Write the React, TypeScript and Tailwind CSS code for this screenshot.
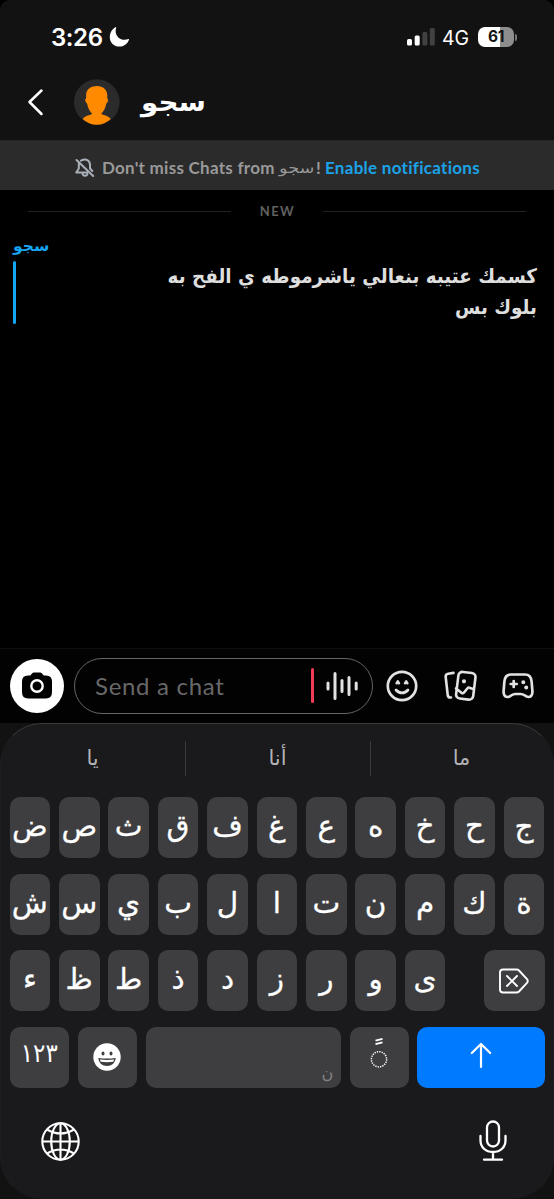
import React from "react";

const latin = "font-['Lato','DejaVu_Sans',sans-serif]";
const arabic = "font-['DejaVu_Sans',sans-serif]";

function StatusBar() {
  return (
    <div className="flex h-[64px] items-start pl-[51px] pr-[37px] pt-[25px] font-['Inter',sans-serif] text-white">
      <span className="w-[52px] whitespace-nowrap text-[24px] font-semibold leading-[25px] tracking-[-0.4px]">3:26</span>
      <svg className="ml-[6px] mt-[2px]" width="21" height="20" viewBox="0 0 21 20" fill="white">
        <path d="M7.200.6C6 4.400 6.600 8 9.300 10.400c2.700 2.400 6.400 2.900 10.200 1.700.5-.1.700.2.500.6C18.400 17 14.800 19.600 10.400 19.600 5 19.600.8 15.500.8 10.200.8 5.800 3 2 6.500.2c.4-.2.800 0 .7.4z" />
      </svg>
      <div className="flex-1" />
      <svg className="mt-[2px]" width="28" height="19" viewBox="0 0 28 19">
        <rect x="0" y="12" width="5" height="6.500" rx="1.500" fill="white" />
        <rect x="7.700" y="8.500" width="5" height="10" rx="1.500" fill="white" />
        <rect x="15.400" y="5" width="5" height="13.500" rx="1.500" fill="#414141" />
        <rect x="22.800" y="1" width="5" height="17.500" rx="1.500" fill="#414141" />
      </svg>
      <span className="ml-[7px] w-[28px] whitespace-nowrap text-[19.500px] font-normal leading-[26px]">4G</span>
      <div className="ml-[8px] mt-[2px] flex h-[20px] w-[36px] items-center justify-center rounded-[7px] bg-[linear-gradient(90deg,#fff_62%,#8d8d8d_62%)] text-[15.500px] font-bold tracking-[-0.3px] text-[#121212]">61</div>
      <div className="ml-[1px] mt-[9px] h-[7px] w-[2px] rounded-r-full bg-[#777]" />
    </div>
  );
}

function Header() {
  return (
    <div className="flex h-[76px] items-start">
      <svg className="ml-[27px] mt-[24px]" width="18" height="28" viewBox="0 0 18 28" fill="none" stroke="white" strokeWidth="2.500" strokeLinecap="round" strokeLinejoin="round">
        <path d="M14.500 2.500L2.500 14l12 12" />
      </svg>
      <svg className="ml-[29px] mt-[15px]" width="46" height="46" viewBox="0 0 46 46">
        <circle cx="22.800" cy="23" r="22.800" fill="#2b2b2b" />
        <path fill="#ff8a00" d="M22.700 7C16 7 12 11 12.100 16.500v2.900c-1.200.3-1 1.700-.4 3.400.3.800.7 1.600 1.400 1.700.8 4.500 2.700 7.800 5 10.200-.8 1.500-5.700.8-9.500 5.200A22.500 22.500 0 0 0 22.700 45.800 22.500 22.500 0 0 0 36.800 39.900c-3.800-4.400-8.700-3.700-9.500-5.200 2.300-2.400 4.200-5.700 5-10.200.7-.1 1.100-.9 1.400-1.700.6-1.700.8-3.100-.4-3.400v-2.900C33.400 11 29.400 7 22.700 7z" />
      </svg>
      <span className={`${arabic} ml-[21px] mt-[20px] origin-left scale-x-[1.07] whitespace-nowrap text-[26px] font-bold leading-[36px] text-white`}>سجو</span>
    </div>
  );
}

function Banner() {
  return (
    <div className={`${latin} flex h-[50px] items-center border-t border-[#242424] bg-[#2b2b2b] pl-[75px] pt-[5px] text-[17px] font-bold leading-[24px]`}>
      <svg width="20" height="20" viewBox="0 0 20 20" fill="none" stroke="#a9b0b8" strokeWidth="2" strokeLinecap="round" strokeLinejoin="round">
        <path d="M6 2.700C11 0 15 2.500 15 7v3.500L17.300 13M3.800 5.500v5L1.300 14.500H12M7.500 15.500c.3 3 4.200 3 5 .5M1.500 2l16.700 16" />
      </svg>
      <span className="ml-[7px] w-[172px] whitespace-nowrap tracking-[0.270px] text-[#999]">Don't miss Chats from</span>
      <span className={`${arabic} ml-[5px] w-[37px] origin-left scale-x-[1.180] whitespace-nowrap text-[15px] font-normal text-[#999]`}>سجو</span>
      <span className="w-[9px] text-[#999]">!</span>
      <span className="whitespace-nowrap tracking-[0.280px] text-[#1ba3e8]">Enable notifications</span>
    </div>
  );
}

function Messages() {
  return (
    <div className="flex h-[458px] flex-col bg-black">
      <div className={`${latin} mt-[11px] flex h-[20px] items-center px-[28px] text-[13px] font-bold text-[#606060]`}>
        <div className="h-px w-[203px] bg-[#222]" />
        <span className="flex-1 pl-[1px] pt-[2px] text-center tracking-[1.400px]">NEW</span>
        <div className="h-px w-[203px] bg-[#222]" />
      </div>
      <span className={`${arabic} ml-[13px] mt-[13px] h-[27px] origin-left scale-x-[1.04] text-[15px] font-bold leading-[24px] text-[#16a5f5]`}>سجو</span>
      <div className="flex pl-[13px] pr-[17px]">
        <div className="h-[63px] w-[3px] rounded-full bg-[#16a5f5]" />
        <div dir="rtl" className={`${arabic} flex-1 origin-right scale-x-[0.918] whitespace-nowrap text-[20px] font-bold leading-[31px] text-[#dedede]`}>
          <div>كسمك عتيبه بنعالي ياشرموطه ي الفح به</div>
          <div>بلوك بس</div>
        </div>
      </div>
    </div>
  );
}

function Composer() {
  return (
    <div className="flex h-[75px] items-center border-t border-[#0f0f0f] bg-[#020202] pb-[1px] pl-[10px]">
      <div className="flex size-[54px] items-center justify-center rounded-full bg-white">
        <svg width="30" height="27" viewBox="0 0 30 27">
          <path fill="black" d="M6 3.500h2.300L10 1.400Q10.800.5 12 .5h6q1.200 0 2 .9l1.700 2.100H24q6 0 6 6V20q0 6.500-6 6.500H6Q0 26.500 0 20V9.500q0-6 6-6z" />
          <circle cx="15" cy="14" r="5.700" fill="none" stroke="white" strokeWidth="2.400" />
        </svg>
      </div>
      <div className="ml-[10px] flex h-[56px] w-[299px] items-center rounded-full border-[1.500px] border-[#666] pl-[20px]">
        <span className={`${latin} w-[216px] whitespace-nowrap text-[24px] tracking-[0.700px] text-[#686868]`}>Send a chat</span>
        <div className="h-[35px] w-[3px] rounded-full bg-[#f23b57]" />
        <svg className="ml-[12px]" width="33" height="30" viewBox="0 0 33 30" stroke="#e2e2e2" strokeWidth="3" strokeLinecap="round">
          <path d="M2 12v6M9 2.500v25M16 9.500v11M23 6.500v17M30.200 12v6" />
        </svg>
      </div>
      <svg className="ml-[13px]" width="32" height="32" viewBox="0 0 32 32" fill="none" stroke="#e2e2e2" strokeWidth="2.700" strokeLinecap="round" strokeLinejoin="round">
        <circle cx="16" cy="16" r="14.200" />
        <path d="M10 20c3.500 3.900 8.500 3.900 12 0" />
        <path d="M10.600 13.300l1.200-2 1.200 2M19 13.300l1.200-2 1.200 2" strokeWidth="2.500" />
      </svg>
      <svg className="ml-[26px]" width="33" height="32" viewBox="0 0 33 32" fill="none" stroke="#e2e2e2" strokeWidth="2.600" strokeLinecap="round" strokeLinejoin="round">
        <path d="M9.500 2.900L4.200 3.700Q1.300 4.200 1.700 7l2 18q.3 2.800 3.300 2.500" />
        <rect x="13.200" y="2.400" width="17.200" height="26.800" rx="4" transform="rotate(7 21.800 15.800)" />
        <path d="M12 18.500l5.500 4.300q1.500 1 2.500-.3l3.500-4.300q1-1.300 2.500-.2l3.300 1" />
        <circle cx="20" cy="11.300" r="1.300" fill="#e2e2e2" strokeWidth="1.600" />
      </svg>
      <svg className="ml-[25px]" width="32" height="28" viewBox="0 0 32 28" fill="none" stroke="#e2e2e2" strokeWidth="2.700" strokeLinecap="round" strokeLinejoin="round">
        <path d="M9 2.500h14q6 0 6.600 7l.8 9.500q.3 5.500-3.500 6-2 .2-4.400-1.700-1.700-1.300-4-1.300h-5q-2.300 0-4 1.300Q7.100 25.200 5.100 25 1.300 24.500 1.600 19l.8-9.500Q3 2.500 9 2.500z" />
        <path d="M11.700 9v6M8.700 12h6" />
        <circle cx="21.300" cy="10.300" r="1.300" fill="#e2e2e2" strokeWidth="1.400" /><circle cx="24.200" cy="15.600" r="1.300" fill="#e2e2e2" strokeWidth="1.400" />
      </svg>
    </div>
  );
}

function Key({ label }: { label: string }) {
  return (
    <div className={`${arabic} flex h-[61px] w-[40.700px] shrink-0 justify-center rounded-[10px] bg-[#3e3e40] pt-[10px] text-[29.500px] leading-[38px] text-white [-webkit-text-stroke:0.3px_white]`}>
      <span>{label}</span>
    </div>
  );
}

const row1 = ["ض", "ص", "ث", "ق", "ف", "غ", "ع", "ه", "خ", "ح", "ج"];
const row2 = ["ش", "س", "ي", "ب", "ل", "ا", "ت", "ن", "م", "ك", "ة"];
const row3 = ["ء", "ظ", "ط", "ذ", "د", "ز", "ر", "و", "ى"];

function Keyboard() {
  return (
    <div className="h-[476px] bg-[#121212]">
      <div className="h-[476px] rounded-[42px] border border-t-[#3b3b3c] border-x-[#1e1e20] border-b-[#1a1a1c] bg-[#1a1a1c] px-[8.500px]">
        <div className={`${arabic} flex h-[73px] items-center pb-[4px] text-[21px] text-[#b3b3b5]`}>
          <span className="w-[175px] pr-[9px] text-center">يا</span>
          <div className="h-[35px] w-px bg-[#3a3a3c]" />
          <span className="w-[184px] text-center">أنا</span>
          <div className="h-[35px] w-px bg-[#3a3a3c]" />
          <span className="flex-1 pl-[8px] text-center">ما</span>
        </div>
        <div className="flex flex-col gap-[15.700px]">
          <div className="flex gap-[8.720px]">{row1.map((k) => <Key key={k} label={k} />)}</div>
          <div className="flex gap-[8.720px]">{row2.map((k) => <Key key={k} label={k} />)}</div>
          <div className="flex gap-[8.720px]">
            {row3.map((k) => <Key key={k} label={k} />)}
            <div className="ml-auto flex h-[61px] w-[61px] items-center justify-center rounded-[10px] bg-[#3e3e40]">
              <svg width="30" height="26" viewBox="0 0 30 26" fill="none" stroke="white" strokeWidth="1.900" strokeLinecap="round" strokeLinejoin="round">
                <path d="M4 1.500h13.500q1.500 0 2.500 1l8 8.700q1.500 1.800 0 3.600l-8 8.700q-1 1-2.500 1H4q-3 0-3-3v-17q0-3 3-3z" />
                <path d="M8 8l10 10M18 8l-10 10" />
              </svg>
            </div>
          </div>
          <div className="flex gap-[8.500px]">
            <div className={`${arabic} flex h-[61px] w-[59.500px] justify-center rounded-[10px] bg-[#3e3e40] pt-[8px] text-[23px] leading-[38px] text-white`}>
              <span className="scale-y-[1.12]">١٢٣</span>
            </div>
            <div className="flex h-[61px] w-[59.700px] items-center justify-center rounded-[10px] bg-[#3e3e40]">
              <svg className="mb-[2px]" width="28" height="28" viewBox="0 0 28 28">
                <circle cx="14" cy="14" r="13.700" fill="white" />
                <ellipse cx="10" cy="10.500" rx="1.500" ry="2" fill="#3e3e40" /><ellipse cx="18" cy="10.500" rx="1.500" ry="2" fill="#3e3e40" />
                <path d="M5.300 15q8.700 1.200 17.400 0c-.5 5-4 8-8.700 8s-8.200-3-8.700-8z" fill="#3e3e40" />
                <path d="M6.900 16.500q7.100.9 14.200 0l-.8 2.300q-6.300.9-12.600 0z" fill="white" />
              </svg>
            </div>
            <div className={`${arabic} flex h-[61px] w-[195.500px] items-end justify-end rounded-[10px] bg-[#3e3e40] pb-[2px] pr-[8px] text-[16px] leading-[24px] text-[#828284]`}>ن</div>
            <div className="flex h-[61px] w-[59px] justify-center rounded-[10px] bg-[#3e3e40] pt-[9px]">
              <svg width="20" height="33" viewBox="0 0 20 33" fill="none" stroke="white">
                <path d="M6.500 4.700l7-1.900M6.500 8.200l7-1.900" strokeWidth="1.800" />
                <circle cx="10" cy="23.300" r="7.600" strokeWidth="1.500" strokeDasharray="1.300 1.085" />
              </svg>
            </div>
            <div className="flex h-[61px] flex-1 justify-center rounded-[10px] bg-[#007aff] pt-[15px]">
              <svg width="22" height="28" viewBox="0 0 22 28" fill="none" stroke="white" strokeWidth="2.200" strokeLinecap="round" strokeLinejoin="round">
                <path d="M11 25V2M1.800 11L11 2l9.200 9" />
              </svg>
            </div>
          </div>
        </div>
        <div className="flex items-start justify-between pl-[31px] pr-[38px] pt-[32px]">
          <svg className="mt-[2px]" width="39" height="39" viewBox="0 0 39 39" fill="none" stroke="white" strokeWidth="2.100">
            <circle cx="19.500" cy="19.500" r="18.200" /><ellipse cx="19.500" cy="19.500" rx="9.300" ry="18.200" />
            <path d="M19.500 1.300v36.400M1.300 19.500h36.400M6 7.500q13.500 8 27 0M6 31.500q13.500-8 27 0" />
          </svg>
          <svg width="28" height="42" viewBox="0 0 28 42" fill="none" stroke="white" strokeWidth="2.300" strokeLinecap="round">
            <rect x="8" y="1.500" width="12" height="25" rx="6" />
            <path d="M1.500 16v4.200c0 7 5 11.800 12.500 11.800s12.500-4.800 12.500-11.800V16M14 32v7.500M5 39.700h18" />
          </svg>
        </div>
      </div>
    </div>
  );
}

export default function App() {
  return (
    <div className="h-[1199px] w-[554px] overflow-hidden bg-black">
      <div className="h-[140px] rounded-t-[10px] bg-[#121212]">
        <StatusBar />
        <Header />
      </div>
      <Banner />
      <Messages />
      <Composer />
      <Keyboard />
    </div>
  );
}
